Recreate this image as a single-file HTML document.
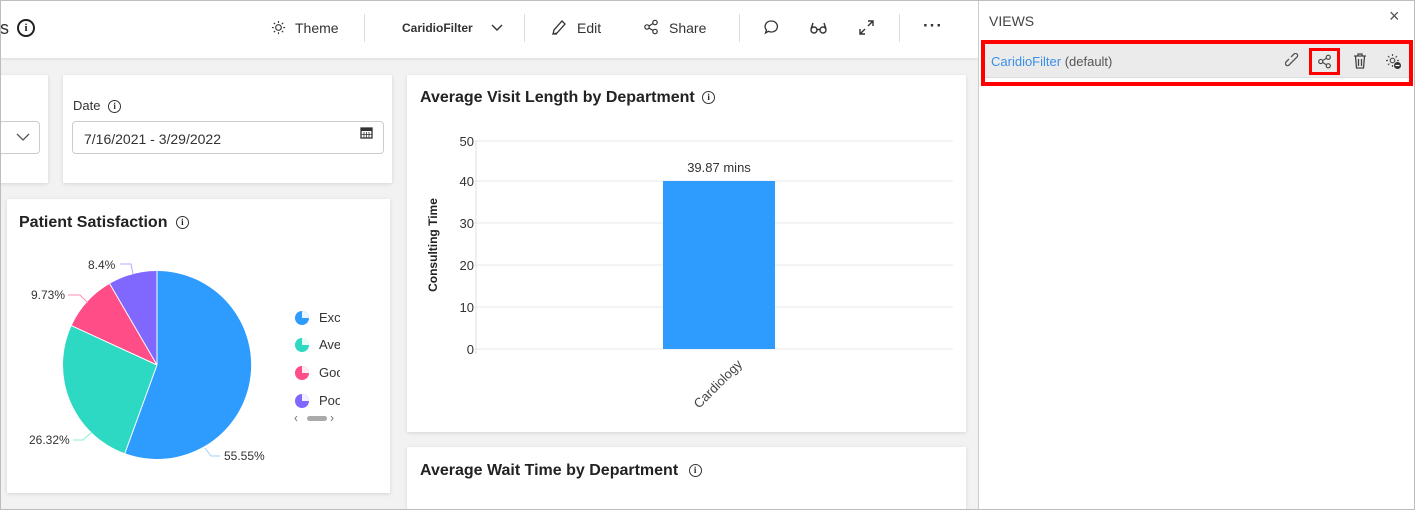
<!DOCTYPE html>
<html><head><meta charset="utf-8"><style>
*{box-sizing:border-box;margin:0;padding:0}
html,body{width:1415px;height:510px;overflow:hidden}
body{background:#f2f2f2;font-family:"Liberation Sans",sans-serif;position:relative;color:#222}
.frame{position:absolute;left:0;top:0;width:1415px;height:510px;border:1px solid #bdbdbd;z-index:20;pointer-events:none}
.hdr{position:absolute;left:0;top:0;width:978px;height:58px;background:#fff;box-shadow:0 1px 3px rgba(0,0,0,.1)}
.hdr .t{position:absolute;top:20px;font-size:14px;color:#333}
.sep{position:absolute;top:14px;width:1px;height:28px;background:#ddd}
.card{position:absolute;background:#fff;box-shadow:0 1px 4px rgba(0,0,0,.12)}
.ttl{position:absolute;font-size:16px;font-weight:bold;color:#222}
.info{display:inline-block;width:13px;height:13px;border:1.5px solid #333;border-radius:50%;font-size:9px;line-height:10px;text-align:center;font-weight:bold;vertical-align:middle;font-family:"Liberation Serif",serif}
.panel{position:absolute;left:978px;top:0;width:437px;height:510px;background:#fff;border-left:1px solid #ccc}
</style></head><body>
<div class="hdr">
  <div class="t" style="left:0;font-size:18px;top:18px">s</div>
  <div style="position:absolute;left:17px;top:19px;width:18px;height:18px;border:2px solid #222;border-radius:50%;font-size:11px;text-align:center;line-height:14px;font-weight:bold;font-family:'Liberation Serif',serif">i</div>
  <svg style="position:absolute;left:271px;top:20px" width="15" height="15" viewBox="0 0 16 16" fill="none" stroke="#333" stroke-width="1.2"><circle cx="8" cy="8" r="3"/><path d="M8 1v2M8 13v2M1 8h2M13 8h2M3 3l1.4 1.4M11.6 11.6L13 13M3 13l1.4-1.4M11.6 4.4L13 3"/></svg>
  <div class="t" style="left:295px">Theme</div>
  <div class="sep" style="left:364px"></div>
  <div class="t" style="left:402px;font-size:12px;font-weight:bold;top:21px">CaridioFilter</div>
  <svg style="position:absolute;left:491px;top:24px" width="12" height="8" viewBox="0 0 12 8"><path d="M1 1l5 5 5-5" fill="none" stroke="#333" stroke-width="1.4"/></svg>
  <div class="sep" style="left:524px"></div>
  <svg style="position:absolute;left:551px;top:19px" width="16" height="17" viewBox="0 0 16 17" fill="none" stroke="#333" stroke-width="1.3"><path d="M2 15l1-4 8-9 3 3-8 9z M2 15h4"/></svg>
  <div class="t" style="left:577px">Edit</div>
  <svg style="position:absolute;left:643px;top:19px" width="16" height="16" viewBox="0 0 16 16" fill="none" stroke="#333" stroke-width="1.2"><circle cx="4" cy="8" r="2.2"/><circle cx="12" cy="3.5" r="2.2"/><circle cx="12" cy="12.5" r="2.2"/><path d="M6 7l4-2.5M6 9l4 2.5"/></svg>
  <div class="t" style="left:669px">Share</div>
  <div class="sep" style="left:739px"></div>
  <svg style="position:absolute;left:763px;top:19px" width="17" height="17" viewBox="0 0 17 17" fill="none" stroke="#333" stroke-width="1.3"><path d="M8.5 2a6 5.5 0 1 1-3 10.3L2.5 14l1-3A6 5.5 0 0 1 8.5 2z"/></svg>
  <svg style="position:absolute;left:809px;top:21px" width="19" height="13" viewBox="0 0 19 13" fill="none" stroke="#333" stroke-width="1.4"><circle cx="5" cy="9" r="3"/><circle cx="14" cy="9" r="3"/><path d="M8 8.5h3M2 8l2-6M17 8l-2-6"/></svg>
  <svg style="position:absolute;left:859px;top:20px" width="15" height="15" viewBox="0 0 15 15" fill="none" stroke="#333" stroke-width="1.4"><path d="M9 1h5v5M14 1L9 6M6 14H1V9M1 14l5-5"/></svg>
  <div class="sep" style="left:899px"></div>
  <div class="t" style="left:923px;font-weight:bold;top:16px;font-size:17px;letter-spacing:1px">···</div>
</div>

<div class="card" style="left:-5px;top:75px;width:53px;height:108px">
  <div style="position:absolute;left:-5px;top:46px;width:50px;height:33px;border:1px solid #ccc;border-radius:4px"></div>
  <svg style="position:absolute;left:21px;top:58px" width="14" height="9" viewBox="0 0 14 9"><path d="M1 1l6 6 6-6" fill="none" stroke="#555" stroke-width="1.3"/></svg>
</div>
<div class="card" style="left:63px;top:75px;width:329px;height:108px">
  <div style="position:absolute;left:10px;top:23px;font-size:13px;color:#333">Date <span class="info" style="margin-left:4px">i</span></div>
  <div style="position:absolute;left:9px;top:46px;width:312px;height:33px;border:1px solid #ccc;border-radius:4px;font-size:14px;color:#333;padding:9px 0 0 11px">7/16/2021 - 3/29/2022</div>
  <svg style="position:absolute;left:297px;top:51px" width="13" height="13" viewBox="0 0 13 13"><rect x="1" y="2" width="11" height="10" fill="none" stroke="#333" stroke-width="1.3"/><rect x="1" y="2" width="11" height="3" fill="#333"/><path d="M4 6v6M6.5 6v6M9 6v6M1 8.5h11" stroke="#333" stroke-width=".8"/></svg>
</div>

<div class="card" style="left:7px;top:199px;width:383px;height:294px">
  <div class="ttl" style="left:12px;top:15px">Patient Satisfaction <span class="info" style="margin-left:4px">i</span></div>
</div>
<svg style="position:absolute;left:0;top:199px" width="390" height="294" viewBox="0 199 390 294">
  <path d="M157 365 L157 271 A94 94 0 1 1 124.9 453.3Z" fill="#2e9bff"/>
  <path d="M157 365 L124.9 453.3 A94 94 0 0 1 71.6 325.7Z" fill="#2ed9c3"/>
  <path d="M157 365 L71.6 325.7 A94 94 0 0 1 109.7 283.8Z" fill="#ff4d88"/>
  <path d="M157 365 L109.7 283.8 A94 94 0 0 1 157 271Z" fill="#8068ff"/>
  <path d="M157 365L157 271M157 365L124.9 453.3M157 365L71.6 325.7M157 365L109.7 283.8" stroke="#fff" stroke-width="1"/>
  <polyline points="120,264 131,264 133,274" fill="none" stroke="#b9aaff"/>
  <polyline points="68,295 80,295 88,303" fill="none" stroke="#ff8fb4"/>
  <polyline points="73,440 83,440 92,432" fill="none" stroke="#8cebdd"/>
  <polyline points="220,456 211,456 205,448" fill="none" stroke="#9cd0ff"/>
  <g font-size="12" fill="#333" font-family="Liberation Sans">
    <text x="88" y="269">8.4%</text>
    <text x="31" y="299">9.73%</text>
    <text x="29" y="444">26.32%</text>
    <text x="224" y="460">55.55%</text>
  </g>
  <g font-size="13" fill="#333" font-family="Liberation Sans">
    <circle cx="302" cy="318" r="7" fill="#2e9bff"/><text x="319" y="322">Exc</text>
    <circle cx="302" cy="345" r="7" fill="#2ed9c3"/><text x="319" y="349">Ave</text>
    <circle cx="302" cy="373" r="7" fill="#ff4d88"/><text x="319" y="377">Goo</text>
    <circle cx="302" cy="401" r="7" fill="#8068ff"/><text x="319" y="405">Poo</text>
    <path d="M302 318V311A7 7 0 0 1 309 318ZM302 345V338A7 7 0 0 1 309 345ZM302 373V366A7 7 0 0 1 309 373ZM302 401V394A7 7 0 0 1 309 401Z" fill="#fff" opacity=".9"/>
    <rect x="340" y="300" width="50" height="115" fill="#fff"/>
  </g>
  <rect x="307" y="416" width="20" height="5" rx="2.5" fill="#aaa"/>
  <path d="M297 416l-2 2.5 2 2.5M331 416l2 2.5-2 2.5" stroke="#777" fill="none"/>
</svg>

<div class="card" style="left:407px;top:75px;width:559px;height:357px">
  <div class="ttl" style="left:13px;top:14px">Average Visit Length by Department <span class="info" style="margin-left:3px">i</span></div>
</div>
<svg style="position:absolute;left:407px;top:75px" width="559" height="357" viewBox="407 75 559 357">
  <g stroke="#e8e8e8" stroke-width="1">
    <path d="M474 141H953M474 181H953M474 223H953M474 265H953M474 307H953M474 349H953"/>
    <path d="M476 141V354" stroke="#e0e0e0"/>
  </g>
  <rect x="663" y="181" width="112" height="168" fill="#2e9bff"/>
  <g font-size="13" fill="#333" font-family="Liberation Sans" text-anchor="end">
    <text x="474" y="146">50</text><text x="474" y="186">40</text><text x="474" y="228">30</text>
    <text x="474" y="270">20</text><text x="474" y="312">10</text><text x="474" y="354">0</text>
  </g>
  <text x="719" y="172" font-size="13" fill="#333" text-anchor="middle" font-family="Liberation Sans">39.87 mins</text>
  <text transform="translate(437,245) rotate(-90)" font-size="12" font-weight="bold" fill="#222" text-anchor="middle" font-family="Liberation Sans">Consulting Time</text>
  <text transform="translate(743,365) rotate(-45)" font-size="13" fill="#444" text-anchor="end" font-family="Liberation Sans">Cardiology</text>
</svg>

<div class="card" style="left:407px;top:447px;width:559px;height:63px">
  <div class="ttl" style="left:13px;top:15px">Average Wait Time by Department <span class="info" style="margin-left:6px">i</span></div>
</div>

<div class="panel">
  <div style="position:absolute;left:10px;top:13px;font-size:14px;color:#444">VIEWS</div>
  <div style="position:absolute;left:410px;top:6px;font-size:18px;color:#555">×</div>
  <div style="position:absolute;left:2px;top:40px;width:432px;height:46px;border:4px solid #f00;background:#fff">
    <div style="position:absolute;left:0;top:0;right:0;height:34px;background:#ebebeb;border-bottom:1px solid #ddd"></div>
    <div style="position:absolute;left:6px;top:10px;font-size:13px;color:#3a8fe8">CaridioFilter <span style="color:#555">(default)</span></div>
    <svg style="position:absolute;left:300px;top:9px" width="16" height="16" viewBox="0 0 16 16" fill="none" stroke="#555" stroke-width="1.3"><path d="M7 9l-3 3a2 2 0 0 1-3-3l3-3M9 7l3-3a2 2 0 0 0-3-3L6 4M5.5 10.5l5-5"/></svg>
    <div style="position:absolute;left:324px;top:4px;width:31px;height:27px;border:3px solid #f00"></div>
    <svg style="position:absolute;left:332px;top:10px" width="15" height="15" viewBox="0 0 16 16" fill="none" stroke="#444" stroke-width="1.2"><circle cx="4" cy="8" r="2.2"/><circle cx="12" cy="3.5" r="2.2"/><circle cx="12" cy="12.5" r="2.2"/><path d="M6 7l4-2.5M6 9l4 2.5"/></svg>
    <svg style="position:absolute;left:368px;top:9px" width="14" height="16" viewBox="0 0 14 16" fill="none" stroke="#444" stroke-width="1.3"><path d="M1 3h12M5 3V1h4v2M2.5 3l1 12h7l1-12M5.5 6v7M8.5 6v7"/></svg>
    <svg style="position:absolute;left:400px;top:9px" width="17" height="17" viewBox="0 0 17 17" fill="none" stroke="#555" stroke-width="1.2"><circle cx="7.5" cy="7.5" r="2.3"/><path d="M7.5 1v2M7.5 12v2M1 7.5h2M12 7.5h2M3 3l1.4 1.4M10.6 10.6L12 12M3 12l1.4-1.4M10.6 4.4L12 3"/><circle cx="12.5" cy="12.5" r="3.5" fill="#333" stroke="none"/><path d="M10.5 12.5h4" stroke="#fff"/></svg>
  </div>
</div>
<div class="frame"></div>
</body></html>
